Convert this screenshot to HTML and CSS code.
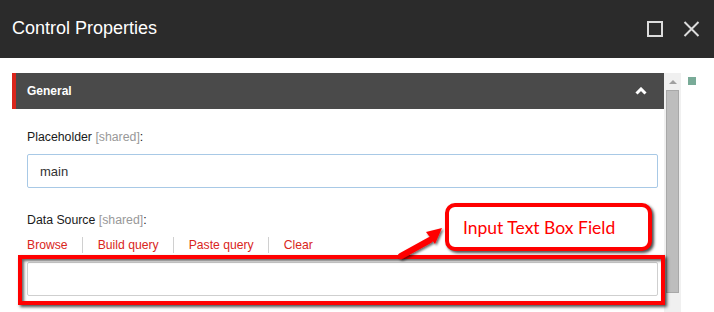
FILE: index.html
```html
<!DOCTYPE html>
<html>
<head>
<meta charset="utf-8">
<link rel="stylesheet" href="styles.css">
</head>
<body>
<div class="page">
  <header class="titlebar">
    <h1 class="title">Control Properties</h1>
    <div class="win-actions">
      <svg class="win-icon" width="16" height="16" viewBox="0 0 16 16"><rect x="1" y="1" width="14" height="14" fill="none" stroke="#dcdcdc" stroke-width="2"/></svg>
      <svg class="win-icon" width="17" height="16" viewBox="0 0 17 16"><path d="M1.5 1 L15.5 15 M15.5 1 L1.5 15" stroke="#dcdcdc" stroke-width="2" fill="none"/></svg>
    </div>
  </header>
  <div class="main">
    <div class="panel-area">
      <section class="panel">
        <div class="panel-head">
          <span class="panel-title">General</span>
          <svg width="12" height="8" viewBox="0 0 12 8"><path d="M1.5 6.5 L6 2 L10.5 6.5" stroke="#fff" stroke-width="3" fill="none" stroke-linejoin="miter"/></svg>
        </div>
        <div class="panel-body">
          <div class="label">Placeholder <span class="shared">[shared]</span>:</div>
          <div class="input input-blue">main</div>
          <div class="label label-2">Data Source <span class="shared">[shared]</span>:</div>
          <div class="links">
            <a class="link">Browse</a>
            <span class="sep"></span>
            <a class="link">Build query</a>
            <span class="sep"></span>
            <a class="link">Paste query</a>
            <span class="sep"></span>
            <a class="link">Clear</a>
          </div>
          <div class="input input-gray"></div>
        </div>
      </section>
    </div>
    <div class="scrollbar">
      <div class="scroll-up"></div>
      <div class="thumb"></div>
    </div>
    <div class="side">
      <div class="green-sq"></div>
    </div>
  </div>

  <div class="highlight-box"></div>
  <div class="callout">Input Text Box Field</div>
  <svg class="arrow" width="60" height="40" viewBox="0 0 60 40">
    <defs>
      <filter id="sh" x="-20%" y="-20%" width="140%" height="140%">
        <feDropShadow dx="1.5" dy="1.5" stdDeviation="1" flood-color="#000" flood-opacity="0.6"/>
      </filter>
    </defs>
    <g filter="url(#sh)">
      <path d="M5 33 L34 17" stroke="#f00" stroke-width="6" stroke-linecap="round"/>
      <path d="M30 9 L46 5 L39 21 Z" fill="#f00"/>
    </g>
  </svg>
</div>
</body>
</html>
```
FILE: styles.css
```css
* { box-sizing: border-box; }
html, body { margin: 0; padding: 0; background: #fff; }
body { font-family: "Liberation Sans", Arial, sans-serif; }
.page { position: relative; width: 714px; height: 312px; overflow: hidden; }

.titlebar {
  height: 58px;
  background: #2b2b2b;
  display: flex;
  align-items: center;
  justify-content: space-between;
  padding: 0 14px 0 12px;
}
.title {
  margin: 0;
  font-size: 18px;
  font-weight: normal;
  color: #fff;
  position: relative;
  top: -1px;
}
.win-actions { display: flex; align-items: center; gap: 20px; }
.win-icon { display: block; }

.main { display: flex; height: 254px; }
.panel-area { width: 664px; padding: 15px 0 0 12px; }
.panel-head {
  height: 36px;
  background: #4a4a4a;
  border-left: 4px solid #d9261c;
  display: flex;
  align-items: center;
  justify-content: space-between;
  padding: 0 17px 0 11px;
}
.panel-title { color: #fff; font-weight: bold; font-size: 12px; }
.panel-head svg { display: block; }

.panel-body { padding: 20px 6px 0 15px; }
.label { font-size: 12.3px; line-height: 16px; color: #1a1a1a; }
.shared { color: #999; }
.label-2 { margin-top: 24px; }
.input {
  margin-top: 9px;
  height: 34px;
  border-radius: 2px;
  font-size: 13px;
  color: #333;
  padding: 0 12px;
  display: flex;
  align-items: center;
}
.input-blue { border: 1px solid #a8c9e6; }
.input-gray { border: 1px solid #cfcfcf; margin-top: 9px; }

.links { display: flex; align-items: center; margin-top: 9px; height: 16px; }
.link { color: #d9261c; font-size: 12.2px; line-height: 16px; }
.sep { width: 1px; height: 16px; background: #d0d0d0; margin: 0 15px 0 14px; }

.scrollbar {
  width: 17px;
  margin-top: 15px;
  background: #f0f0f0;
  display: flex;
  flex-direction: column;
  align-items: center;
}
.scroll-up {
  margin-top: 7px;
  width: 0; height: 0;
  border-left: 4px solid transparent;
  border-right: 4px solid transparent;
  border-bottom: 4px solid #a0a0a0;
}
.thumb {
  margin-top: 6px;
  width: 13px;
  height: 203px;
  background: #bdbdbd;
  border: 1px solid #a8a8a8;
}
.side { padding: 19px 0 0 7px; }
.green-sq { width: 8px; height: 8px; background: #79ab98; }

.highlight-box {
  position: absolute;
  left: 18px; top: 255px;
  width: 647px; height: 50px;
  border: 4px solid #f00;
  box-shadow: 2px 2px 3px rgba(0,0,0,0.7), inset 2px 2px 3px rgba(0,0,0,0.6);
}
.callout {
  position: absolute;
  left: 445px; top: 203px;
  width: 207px; height: 48px;
  border: 4px solid #f00;
  border-radius: 10px;
  background: #fff;
  box-shadow: 2px 2px 3px rgba(0,0,0,0.7);
  color: #f00;
  font-family: Lato, "Liberation Sans", sans-serif;
  font-size: 17.5px;
  padding-left: 14px;
  display: flex;
  align-items: center;
}
.arrow { position: absolute; left: 396px; top: 223px; }
```
